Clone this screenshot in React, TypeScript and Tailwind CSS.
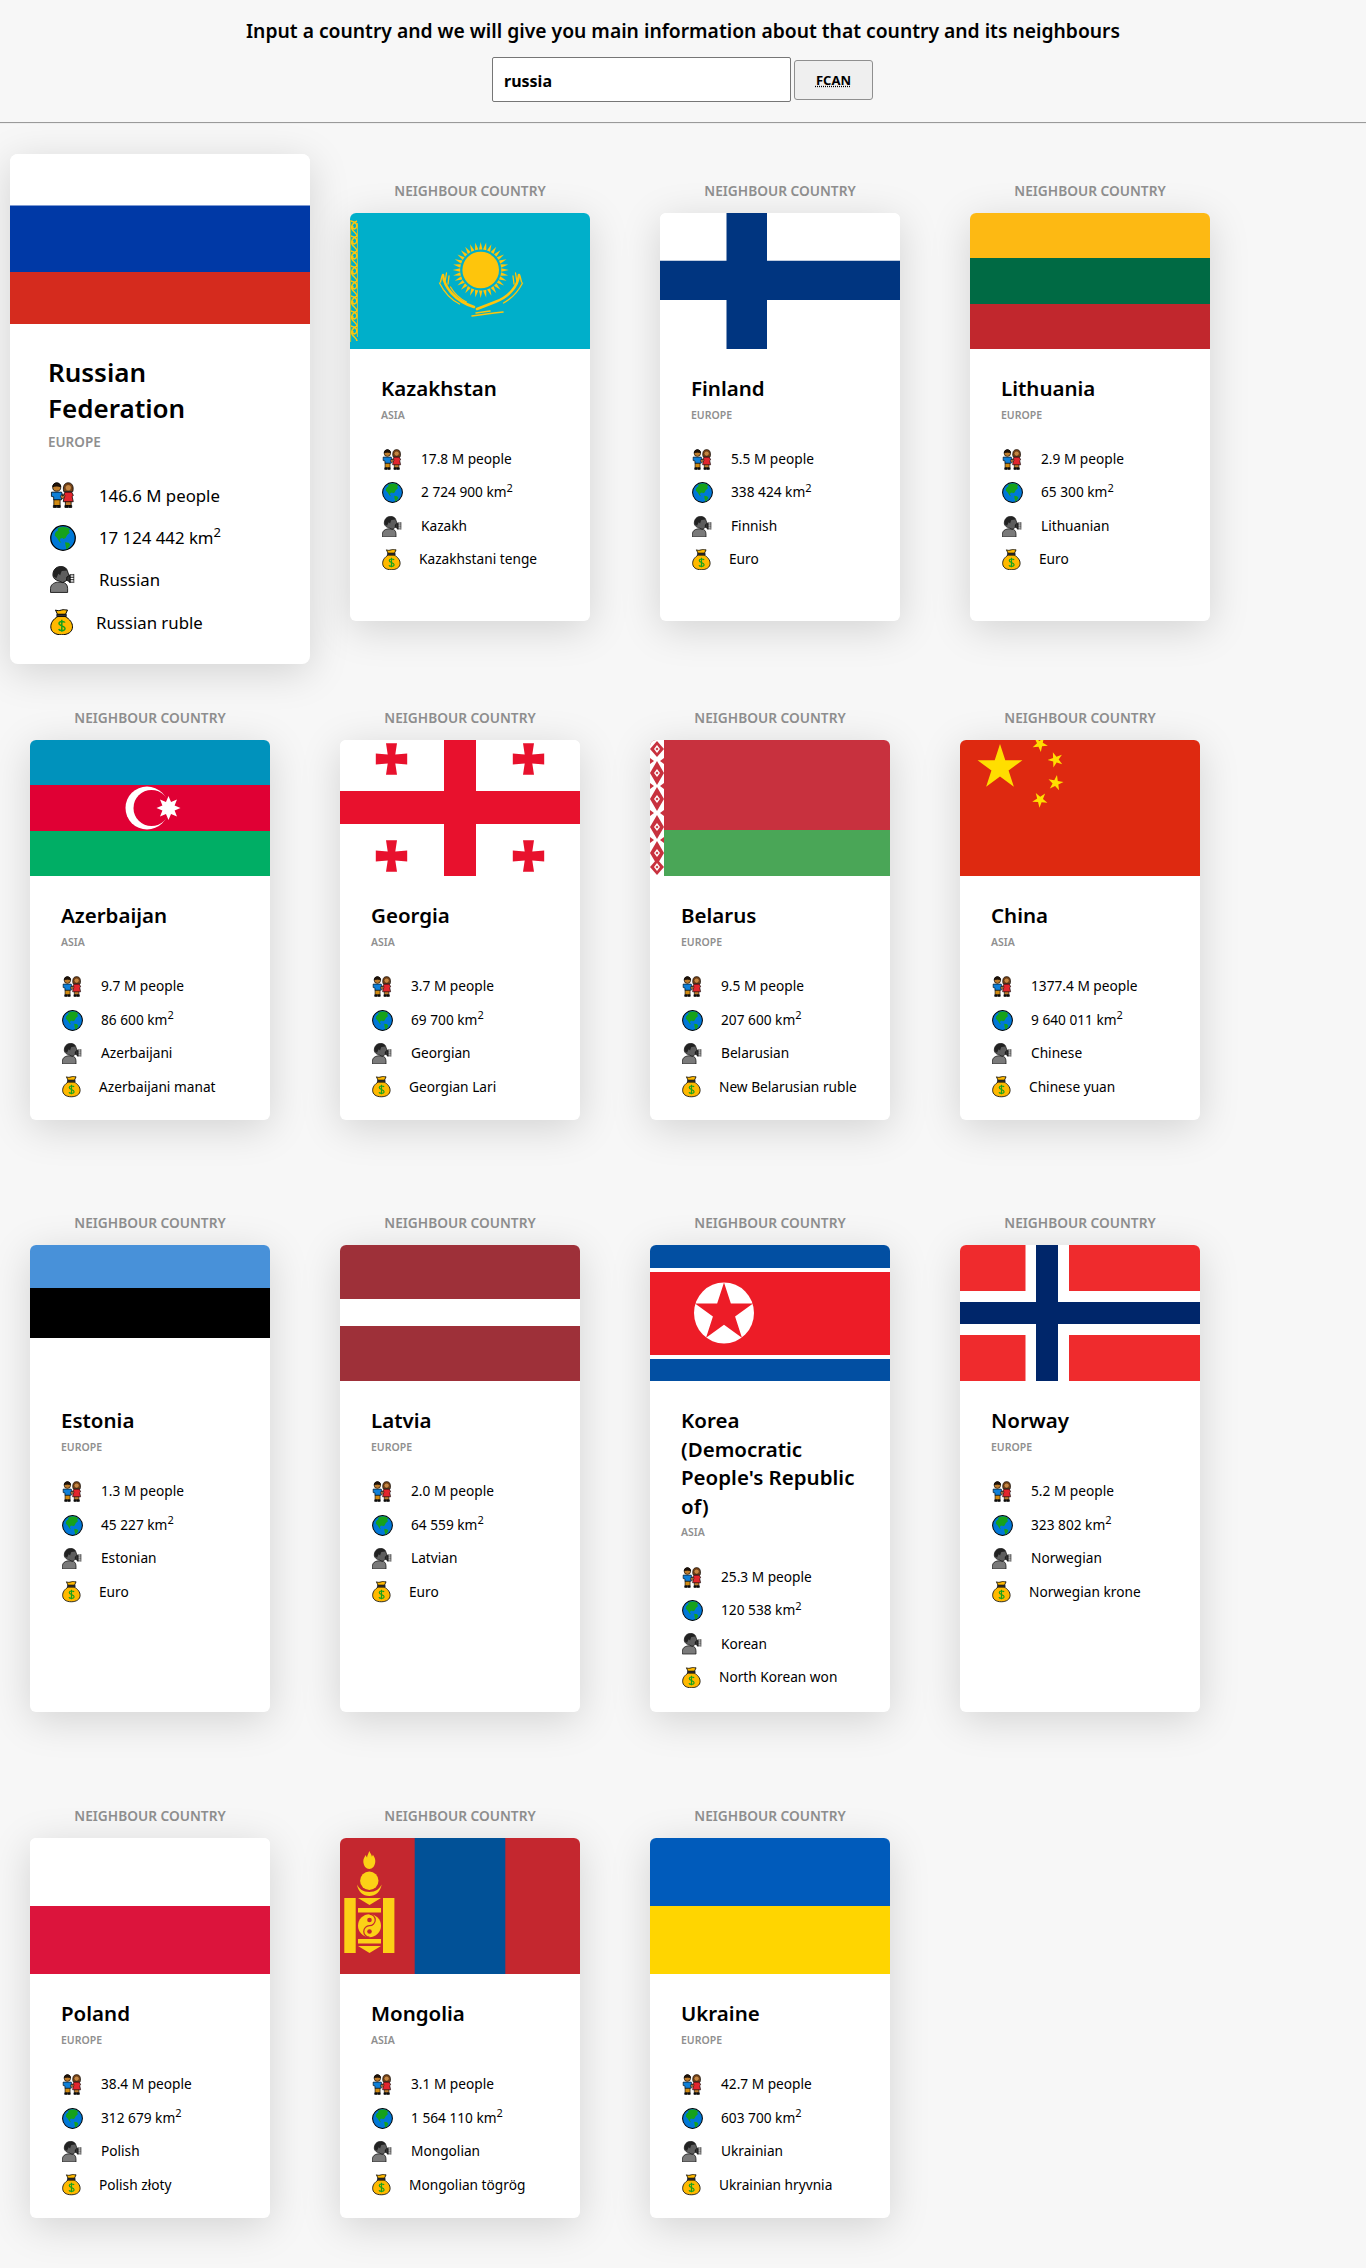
import React from "react";

const Couple = ({ s }: { s: number }) => (
  <svg width={s} height={s * 1.05} viewBox="0 0 26 27.300" className="block">
    <g stroke="#000" strokeWidth="0.8" strokeLinejoin="round">
      <path d="M4 18h6.500v6.500H4z" fill="#D08A12" />
      <path d="M3.500 24.500h3.200v2H3.500zM7.500 24.500h3.200v2H7.500z" fill="#111" />
      <path d="M1.500 10.500h10.500l1.500 4-1.500 1v3H3.800v-3l-2.300-.5z" fill="#0F7FD6" />
      <circle cx="7" cy="5.400" r="4.200" fill="#C07E2E" />
      <path d="M2.900 5C3 2.200 5 .8 7 .8s4 1.400 4.200 4.200c-2-1-6.200-1-8.300 0z" fill="#22140A" />
      <path d="M16 19h6v5.500h-6z" fill="#C07E2E" />
      <path d="M15.500 24.500h3.200v2h-3.200zM19.400 24.500h3.200v2h-3.200z" fill="#111" />
      <path d="M15.500 10.500h7l1.800 3.500-1.300 1 1.200 5.500H13.800l1-5.500-1-1z" fill="#E3262E" />
      <path d="M14.300 10c-1.300-5.500.7-9.200 4.700-9.200S25 4.500 23.700 10z" fill="#7A4316" />
      <circle cx="19" cy="6" r="3.200" fill="#C68642" strokeWidth="0.3" />
      <path d="M12 13l1.300 1.800 1.700-1.800.7 1.500-2 2.800h-1.500l-1.200-2z" fill="#C68642" strokeWidth="0.6" />
    </g>
  </svg>
);

const Globe = ({ s }: { s: number }) => (
  <svg width={s} height={s} viewBox="0.500 0.500 25 25" className="block">
    <circle cx="13" cy="13" r="11.800" fill="#0078D7" stroke="#000" strokeWidth="1.200" />
    <path d="M8 3.500c3-1.200 6-1.500 9-.5l3 1.500-1.500 1.500 1 2-2.500 2-1.500 3-2 1-1-1-2 .5-.5 2.200 1.500 2-2-1-2-3.500-2.500-2.500.5-2.500 1-1.500L8 6z" fill="#16A21B" />
    <path d="M15 17l3.500.5 1.500 2-2 3-1.500 1.500-1-3.500z" fill="#16A21B" />
  </svg>
);

const Speaking = ({ s }: { s: number }) => (
  <svg width={s} height={s * 1.1} viewBox="0.500 0.500 25 27.500" className="block">
    <path d="M1 27.500v-4c0-4 3.500-6 7-6.500h5c3.200.5 5.500 2.500 5.500 6.500v4z" fill="#7A7A7A" stroke="#000" strokeWidth="0.8" />
    <path d="M3.500 10.500C3 5 6.500 1 11.500 1c3.800 0 6.300 2 6.800 4.500l1.500 4.500c0 1-1 1-1.500 1.200 0 1.500.5 3.500-1.500 4.500l-3.300 1.800-3.500-1.500C6 15 4 13 3.500 10.500z" fill="#5E5E5E" stroke="#000" strokeWidth="0.8" />
    <path d="M3.800 11C3 5 6.500 1 11.500 1c3.500 0 5.800 1.500 6.500 4l-5.500.5c-1 2-1.500 4-1.500 4.500L9 8.500 7 13z" fill="#222" />
    <g fill="none" stroke="#000" strokeWidth="0.9" strokeLinecap="round">
      <path d="M21 9.500h3.500M21 12h3.500M21 14.500h3.500M20.500 17h3.500" />
      <path d="M24.800 9v8.500M21 9.500v8" strokeWidth="0.7" />
    </g>
    <path d="M17.500 12l3.500-2v7l-3.500-2z" fill="#333" stroke="#000" strokeWidth="0.7" />
  </svg>
);

const Bag = ({ s }: { s: number }) => (
  <svg width={s} height={s * 1.16} viewBox="0 0.500 23 26" className="block">
    <path d="M8 7.500C3 10.500.800 14 .800 18 .8 23 5 26 11.500 26s11-3 11-8c0-4-2.500-7.500-7.500-10.500z" fill="#FFB900" stroke="#000" strokeWidth="1" />
    <path d="M5.500 1.200c2 .8 3.500.8 6 0s3.500 0 6 0l-2 4.300h-8z" fill="#FFB900" stroke="#000" strokeWidth="1" />
    <path d="M6.800 5.500h9.500v2.200H6.800z" fill="#333" stroke="#000" strokeWidth="0.7" />
    <path d="M15 13.700c-.6-1.200-5.800-2-6 .8s6 2.200 6 5.200-5.700 2.200-6.300.6M11.800 11v12" fill="none" stroke="#16A21B" strokeWidth="1.500" />
  </svg>
);

const star = (cx: number, cy: number, r: number, rot = -90, inner = 0.382, n = 5) => {
  const pts: string[] = [];
  for (let i = 0; i < n * 2; i++) {
    const a = ((rot + (i * 180) / n) * Math.PI) / 180;
    const rr = i % 2 ? r * inner : r;
    pts.push(`${(cx + rr * Math.cos(a)).toFixed(2)},${(cy + rr * Math.sin(a)).toFixed(2)}`);
  }
  return pts.join(" ");
};

const GCross = ({ x, y }: { x: number; y: number }) => (
  <path
    transform={`translate(${x} ${y})`}
    d="M-5.500-15.700H5.500L3.800-4.500 15.700-5.500V5.500L3.800 4.500 5.500 15.700H-5.500L-3.800 4.500-15.700 5.500V-5.500L-3.800-4.500z"
    fill="#E8112D"
  />
);

const range = (n: number) => Array.from({ length: n }, (_, i) => i);

const flags: Record<string, React.ReactNode> = {
  Kazakhstan: (
    <>
      <rect width="240" height="136" fill="#00AFCA" />
      <g fill="none" stroke="#FEC50C" strokeWidth="1.500">
        <path d="M0.600 7v122M7.400 10v114" strokeWidth="0.800" />
        {range(8).map((i) => (
          <path key={i} d={`M1 ${8 + i * 15}c5 1 7 4 5 7-2 2-4 0-3-2M7 ${8 + i * 15}c-4 2-6 5-5 8 1 3 5 4 5 7`} />
        ))}
      </g>
      <circle cx="130.700" cy="57" r="18.300" fill="#FEC50C" />
      {range(32).map((i) => (
        <path key={i} d="M-1.700-20.500L0-28 1.700-20.500z" fill="#FEC50C" transform={`translate(130.700 57) rotate(${i * 11.250})`} />
      ))}
      <g fill="none" stroke="#FEC50C" strokeLinecap="round">
        <path d="M93 62c1 12 12 26 31 32" strokeWidth="2.600" />
        <path d="M89.500 70c5 10 12 17 20 21M92 63l-1.500 6M96.500 60l-1.500 9M99 63l-1 8M100.500 74c4 7 10 12 16 15" strokeWidth="1.300" />
        <path d="M169 62c-1 11-10 22-24 27l-18 7" strokeWidth="2.600" />
        <path d="M172.500 70c-4 8-10 15-19 20M170 63l1.500 6M165.500 60l1.500 9M163 63l1 8" strokeWidth="1.300" />
        <path d="M122 103l22-3 9-1M126 100l14-2" strokeWidth="1.600" />
      </g>
    </>
  ),
  Finland: (
    <>
      <rect width="240" height="136" fill="#fff" />
      <path d="M66.500 0h40.500v136H66.500zM0 47.700h240v39.300H0z" fill="#003580" />
    </>
  ),
  Lithuania: (
    <>
      <rect width="240" height="45" fill="#FDB913" />
      <rect y="45" width="240" height="46" fill="#006A44" />
      <rect y="91" width="240" height="45" fill="#C1272D" />
    </>
  ),
  Azerbaijan: (
    <>
      <rect width="240" height="45" fill="#0092BC" />
      <rect y="45" width="240" height="46" fill="#E00034" />
      <rect y="91" width="240" height="45" fill="#00AE65" />
      <circle cx="117" cy="68" r="21.500" fill="#fff" />
      <circle cx="121.500" cy="68" r="18" fill="#E00034" />
      <polygon points={star(138.500, 68, 12, -90, 0.55, 8)} fill="#fff" />
    </>
  ),
  Georgia: (
    <>
      <rect width="240" height="136" fill="#fff" />
      <path d="M104 0h32v136h-32zM0 51h240v33H0z" fill="#E8112D" />
      <GCross x={51.500} y={19} />
      <GCross x={188.500} y={19} />
      <GCross x={51.500} y={116} />
      <GCross x={188.500} y={116} />
    </>
  ),
  Belarus: (
    <>
      <rect width="240" height="90" fill="#C8313E" />
      <rect y="90" width="240" height="46" fill="#4AA657" />
      <rect width="14" height="136" fill="#fff" />
      {[9, 33, 59, 87, 113, 127].map((y, i) => (
        <g key={i} fill="#C8313E">
          <path d={`M7 ${y - (i % 5 ? 12 : 8)}L14 ${y}L7 ${y + (i % 5 ? 12 : 8)}L0 ${y}z`} />
          <path d={`M7 ${y - 4}L10 ${y}L7 ${y + 4}L4 ${y}z`} fill="#fff" />
          <path d={`M7 ${y - 1.500}L8.500 ${y}L7 ${y + 1.500}L5.500 ${y}z`} />
        </g>
      ))}
      {[21, 46, 73, 100].map((y) => (
        <path key={y} d={`M0 ${y - 3}L4 ${y}L0 ${y + 3}zM14 ${y - 3}L10 ${y}L14 ${y + 3}z`} fill="#C8313E" />
      ))}
    </>
  ),
  China: (
    <>
      <rect width="240" height="136" fill="#DE2910" />
      <g fill="#FFDE00">
        <polygon points={star(40, 27.600, 23.600)} />
        <polygon points={star(80, 4, 8, -60)} />
        <polygon points={star(95.600, 19.700, 8, -110)} />
        <polygon points={star(95.600, 43, 8, -80)} />
        <polygon points={star(80, 59.700, 8, -50)} />
      </g>
    </>
  ),
  Estonia: (
    <>
      <rect width="240" height="136" fill="#fff" />
      <rect width="240" height="43" fill="#4891D9" />
      <rect y="43" width="240" height="50" fill="#000" />
    </>
  ),
  Latvia: (
    <>
      <rect width="240" height="136" fill="#9E3039" />
      <rect y="54" width="240" height="27" fill="#fff" />
    </>
  ),
  Korea: (
    <>
      <rect width="240" height="136" fill="#024FA2" />
      <rect y="23" width="240" height="91" fill="#fff" />
      <rect y="27" width="240" height="83" fill="#ED1C27" />
      <ellipse cx="74" cy="68" rx="30" ry="30.500" fill="#fff" />
      <polygon points={star(74, 68, 30.500)} fill="#ED1C27" />
    </>
  ),
  Norway: (
    <>
      <rect width="240" height="136" fill="#EF2B2D" />
      <path d="M65.500 0H109v136H65.500zM0 46h240v44H0z" fill="#fff" />
      <path d="M76 0h22v136H76zM0 57h240v22H0z" fill="#00266A" />
    </>
  ),
  Poland: (
    <>
      <rect width="240" height="68" fill="#fff" />
      <rect y="68" width="240" height="68" fill="#DC143C" />
    </>
  ),
  Mongolia: (
    <>
      <rect width="240" height="136" fill="#C4272F" />
      <rect x="74.700" width="90.600" height="136" fill="#015197" />
      <g fill="#FCD116">
        <path d="M29.300 13c1 2.500 2.500 3.500 2.500 5.500 1-.5 1-2 1-2 1.500 2.500 2.500 4 2.500 6.500 0 5-3 8-6 8s-6-3-6-8c0-2.500 1.500-4.500 2.500-6 .5 1 .5 2 1.300 2.500 0-2 1.200-3.500 2.200-6.500z" />
        <circle cx="29.300" cy="42.700" r="9.200" />
        <path d="M17 46.500c1 7 6 11.500 12.300 11.500s11.300-4.500 12.300-11.500c-2 4.500-6 7.500-12.300 7.500S19 51 17 46.500z" />
        <path d="M4.300 60h11.400v55H4.300zM43 60h11.400v55H43zM18 60h23l-11.500 7zM18 70h23v4.500H18zM18 101h23v4.500H18zM18 108h23l-11.500 7z" />
        <circle cx="29.500" cy="87.700" r="11.500" />
      </g>
      <path d="M29.500 76.200a5.750 5.750 0 0 1 0 11.500 5.750 5.750 0 0 0 0 11.500" fill="none" stroke="#C4272F" strokeWidth="1.200" />
      <circle cx="29.500" cy="82" r="2.300" fill="#C4272F" />
      <circle cx="29.500" cy="93.500" r="2.300" fill="#C4272F" />
    </>
  ),
  Ukraine: (
    <>
      <rect width="240" height="68" fill="#005BBB" />
      <rect y="68" width="240" height="68" fill="#FFD500" />
    </>
  ),
};

type C = { key: string; name: string; cont: string; pop: string; area: string; lang: string; cur: string };
const rows: C[][] = [
  [
    { key: "Kazakhstan", name: "Kazakhstan", cont: "ASIA", pop: "17.8", area: "2 724 900", lang: "Kazakh", cur: "Kazakhstani tenge" },
    { key: "Finland", name: "Finland", cont: "EUROPE", pop: "5.5", area: "338 424", lang: "Finnish", cur: "Euro" },
    { key: "Lithuania", name: "Lithuania", cont: "EUROPE", pop: "2.9", area: "65 300", lang: "Lithuanian", cur: "Euro" },
  ],
  [
    { key: "Azerbaijan", name: "Azerbaijan", cont: "ASIA", pop: "9.7", area: "86 600", lang: "Azerbaijani", cur: "Azerbaijani manat" },
    { key: "Georgia", name: "Georgia", cont: "ASIA", pop: "3.7", area: "69 700", lang: "Georgian", cur: "Georgian Lari" },
    { key: "Belarus", name: "Belarus", cont: "EUROPE", pop: "9.5", area: "207 600", lang: "Belarusian", cur: "New Belarusian ruble" },
    { key: "China", name: "China", cont: "ASIA", pop: "1377.4", area: "9 640 011", lang: "Chinese", cur: "Chinese yuan" },
  ],
  [
    { key: "Estonia", name: "Estonia", cont: "EUROPE", pop: "1.3", area: "45 227", lang: "Estonian", cur: "Euro" },
    { key: "Latvia", name: "Latvia", cont: "EUROPE", pop: "2.0", area: "64 559", lang: "Latvian", cur: "Euro" },
    { key: "Korea", name: "Korea (Democratic People's Republic of)", cont: "ASIA", pop: "25.3", area: "120 538", lang: "Korean", cur: "North Korean won" },
    { key: "Norway", name: "Norway", cont: "EUROPE", pop: "5.2", area: "323 802", lang: "Norwegian", cur: "Norwegian krone" },
  ],
  [
    { key: "Poland", name: "Poland", cont: "EUROPE", pop: "38.4", area: "312 679", lang: "Polish", cur: "Polish złoty" },
    { key: "Mongolia", name: "Mongolia", cont: "ASIA", pop: "3.1", area: "1 564 110", lang: "Mongolian", cur: "Mongolian tögrög" },
    { key: "Ukraine", name: "Ukraine", cont: "EUROPE", pop: "42.7", area: "603 700", lang: "Ukrainian", cur: "Ukrainian hryvnia" },
  ],
];

const shadow = "shadow-[0_8px_40px_rgba(0,0,0,0.15)]";

function Neighbour({ c, extra }: { c: C; extra?: string }) {
  return (
    <div className={`ml-[30px] mr-[40px] flex w-[240px] flex-col ${extra ?? ""}`}>
      <div className="mb-[12px] h-[20px] text-center text-[13.700px] font-semibold leading-[20px] text-[#8f8f8f]">NEIGHBOUR COUNTRY</div>
      <div className={`flex-1 overflow-hidden rounded-[6px] bg-white ${shadow}`}>
        <svg width="240" height="136" viewBox="0 0 240 136" className="block">
          {flags[c.key]}
        </svg>
        <div className="pl-[31px] pr-[29px] pt-[25px] pb-[16.500px]">
          <h2 className="text-[20.500px] font-semibold leading-[28.500px] text-black">{c.name}</h2>
          <div className="mt-[5px] h-[15px] text-[10.500px] font-semibold leading-[15px] text-[#8f8f8f]">{c.cont}</div>
          <ul className="mt-[20px] text-[13.700px] text-black">
            <li className="flex h-[33.500px] items-center"><span className="w-[40px] pl-[1px]"><Couple s={20} /></span>{c.pop} M people</li>
            <li className="flex h-[33.500px] items-center"><span className="w-[40px] pl-[1px]"><Globe s={21} /></span><span>{c.area} km<sup className="text-[11px]">2</sup></span></li>
            <li className="flex h-[33.500px] items-center"><span className="w-[40px] pl-[1px]"><Speaking s={19.500} /></span>{c.lang}</li>
            <li className="flex h-[33.500px] items-center"><span className="w-[38px] pl-[1px]"><Bag s={18.500} /></span>{c.cur}</li>
          </ul>
        </div>
      </div>
    </div>
  );
}

export default function App() {
  return (
    <div className="min-h-[2268px] bg-[#f7f7f7] pb-[50px] text-black [font-family:'Noto_Sans',sans-serif]">
      <header className="flex h-[122px] flex-col items-center">
        <h1 className="mt-[18px] text-[19.300px] font-semibold leading-[26px]">Input a country and we will give you main information about that country and its neighbours</h1>
        <form className="-ml-[1px] mt-[13px] flex items-center gap-[3px]">
          <input readOnly value="russia" className="h-[45px] w-[299px] rounded-[2px] border border-[#767676] bg-white px-[11px] pt-[2px] text-[16px] font-bold text-black outline-none" />
          <button type="button" className="h-[40px] w-[79px] rounded-[3px] border border-[#8f8f8f] bg-[#efefef] pt-[2px] text-[13px] font-bold">
            <abbr title="Find country and neighbours" className="underline decoration-dotted">FCAN</abbr>
          </button>
        </form>
      </header>
      <hr className="h-0 border-t border-b border-t-[#9a9a9a] border-b-[#eeeeee]" />

      <section className="mt-[30px] flex">
        <div className={`ml-[10px] mr-[10px] w-[300px] overflow-hidden rounded-[8px] bg-white ${shadow}`}>
          <svg width="300" height="170" viewBox="0 0 300 170" className="block">
            <rect width="300" height="51.500" fill="#fff" />
            <rect y="51.500" width="300" height="66.500" fill="#0039A6" />
            <rect y="118" width="300" height="52" fill="#D52B1E" />
          </svg>
          <div className="pl-[38px] pr-[20px] pt-[31px] pb-[21px]">
            <h2 className="text-[26px] font-semibold leading-[35.800px]">Russian Federation</h2>
            <div className="mt-[6.500px] h-[19px] text-[13.500px] font-semibold leading-[19px] text-[#8f8f8f]">EUROPE</div>
            <ul className="mt-[22px] text-[16.800px]">
              <li className="flex h-[42.300px] items-center"><span className="w-[51px] pl-[2px]"><Couple s={25} /></span>146.6 M people</li>
              <li className="flex h-[42.300px] items-center"><span className="w-[51px] pl-[2px]"><Globe s={26} /></span><span>17 124 442 km<sup className="text-[13px]">2</sup></span></li>
              <li className="flex h-[42.300px] items-center"><span className="w-[51px] pl-[2px]"><Speaking s={24.500} /></span>Russian</li>
              <li className="flex h-[42.300px] items-center"><span className="w-[48px] pl-[2px]"><Bag s={23} /></span>Russian ruble</li>
            </ul>
          </div>
        </div>
        {rows[0].map((c) => <Neighbour key={c.key} c={c} extra="mt-[27px] mb-[43px]" />)}
      </section>

      <section className="mt-[44px] flex">{rows[1].map((c) => <Neighbour key={c.key} c={c} />)}</section>
      <section className="mt-[93px] flex min-h-[499px]">{rows[2].map((c) => <Neighbour key={c.key} c={c} />)}</section>
      <section className="mt-[94px] flex">{rows[3].map((c) => <Neighbour key={c.key} c={c} />)}</section>
    </div>
  );
}
